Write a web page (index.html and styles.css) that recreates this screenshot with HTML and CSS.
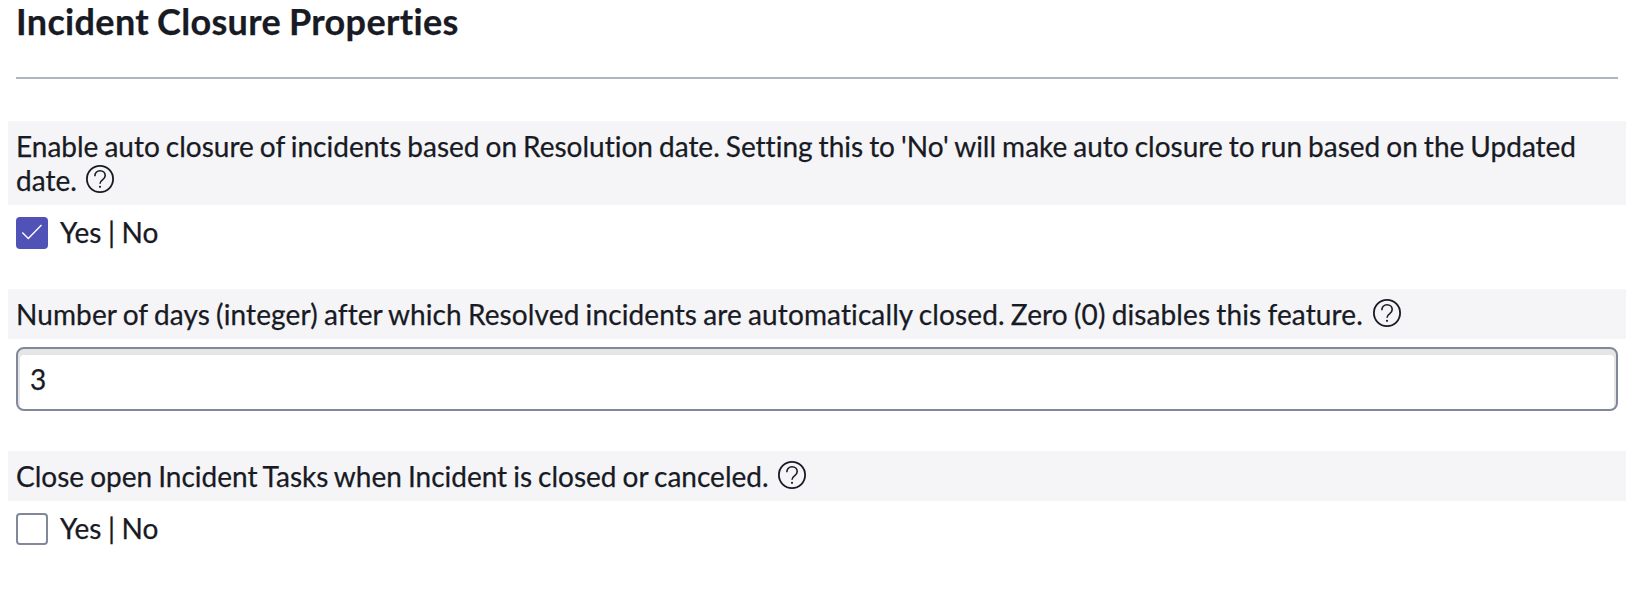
FILE: index.html
```html
<!DOCTYPE html>
<html lang="en">
<head>
<meta charset="utf-8">
<title>Incident Closure Properties</title>
<link rel="stylesheet" href="styles.css">
</head>
<body>
<svg class="defs" width="0" height="0"><symbol id="help" viewBox="0 0 28 28"><circle cx="14" cy="14" r="13.1"/><path class="mark" d="M8.9 11.3V10.800c0-2.900 2.100-5 5.100-5s5.200 2 5.200 4.700c0 2.100-1.100 3.200-2.700 4.400-1.700 1.200-2.500 2-2.500 3.900"/><circle class="dot" cx="14" cy="21.8" r="1.1"/></symbol></svg>
<main class="page">
<h1 class="title">Incident Closure Properties</h1>
<hr class="rule">
<section class="property">
<div class="label">Enable auto closure of incidents based on Resolution date. Setting this to 'No' will make auto closure to run based on the Updated date. <svg class="help"><use href="#help"/></svg></div>
<div class="choice"><span class="box checked"><svg class="tick" viewBox="0 0 32 32"><path d="M6.300 15.500l6 6L25.500 8"/></svg></span><span class="options">Yes | No</span></div>
</section>
<section class="property">
<div class="label spaced">Number of days (integer) after which Resolved incidents are automatically closed. Zero (0) disables this feature. <svg class="help"><use href="#help"/></svg></div>
<input class="field" type="text" value="3">
</section>
<section class="property">
<div class="label">Close open Incident Tasks when Incident is closed or canceled. <svg class="help"><use href="#help"/></svg></div>
<div class="choice"><span class="box"></span><span class="options">Yes | No</span></div>
</section>
</main>
</body>
</html>
```
FILE: styles.css
```css
* { box-sizing: border-box; }
body { margin: 0; background: #fff; color: #181a24; font: 28px/34px Lato, sans-serif; font-variant-ligatures: none; word-spacing: -1.13px; -webkit-text-stroke: 0.25px; overflow: hidden; }
.defs { position: absolute; }
.page { padding: 0 18px 0 8px; }
.title { margin: 0; padding: 0 8px; height: 77px; font-size: 36px; line-height: 42px; font-weight: 700; letter-spacing: 0.34px; }
.rule { margin: 0 8px 42px; border: 0; height: 2px; background: #aeb4c1; }
.property { margin-bottom: 40px; }
.label { padding: 8px; background: #f5f5f8; }
.spaced { letter-spacing: 0.115px; }
.help { width: 28px; height: 28px; margin-left: 3.5px; vertical-align: -2px; fill: none; stroke: #181a24; stroke-width: 1.8; }
.mark { stroke-width: 1.6; }
.dot { fill: #181a24; stroke: none; }
.choice { display: flex; align-items: flex-start; gap: 12px; padding: 12px 8px 0; }
.options { line-height: 30px; word-spacing: -0.6px; }
.box { display: flex; width: 32px; height: 32px; border: 2px solid #81889a; border-radius: 4px; }
.checked { border: 0; background: #5052b8; }
.tick { width: 32px; height: 32px; fill: none; stroke: #fff; stroke-width: 1.4; }
.field { display: block; width: calc(100% - 16px); height: 64px; margin: 8px 8px 0; padding: 0 12px; border: 2px solid #81889a; border-radius: 8px; font: inherit; color: inherit; box-shadow: inset 0 4px 0 2px #e5e5e5; outline: 0; }
```
